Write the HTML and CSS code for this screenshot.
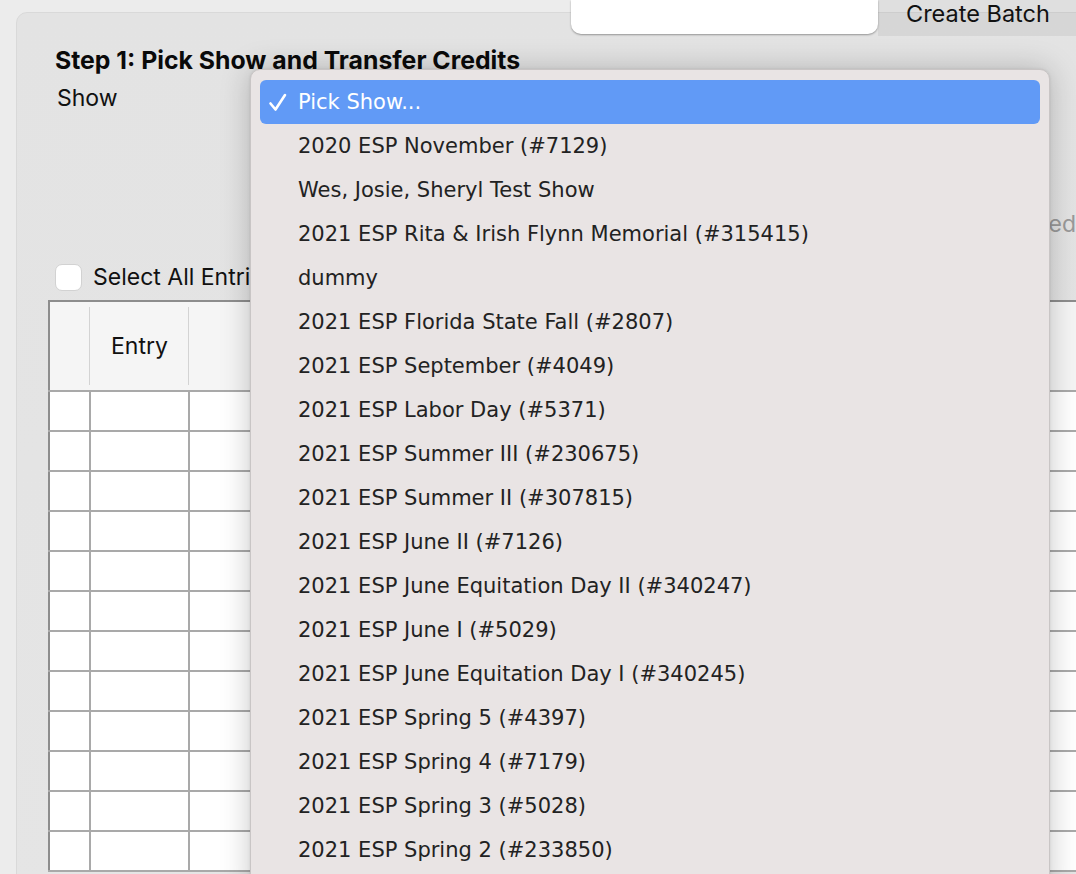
FILE: index.html
```html
<!DOCTYPE html>
<html>
<head>
<meta charset="utf-8">
<link rel="stylesheet" href="styles.css">
</head>
<body>
<header class="topbar">
  <div class="search-field"></div>
  <button class="batch-btn">Create Batch</button>
</header>

<main class="panel">
  <h2 class="step-title">Step 1: Pick Show and Transfer Credits</h2>
  <div class="show-row">Show</div>
  <div class="status-row"><span class="status-text">Credits Transferred</span></div>
  <label class="select-all"><span class="checkbox"></span><span>Select All Entries</span></label>

  <table class="entries">
    <thead>
      <tr><th class="c1"></th><th class="c2">Entry</th><th class="c3"></th></tr>
    </thead>
    <tbody>
      <tr><td></td><td></td><td></td></tr>
      <tr><td></td><td></td><td></td></tr>
      <tr><td></td><td></td><td></td></tr>
      <tr><td></td><td></td><td></td></tr>
      <tr><td></td><td></td><td></td></tr>
      <tr><td></td><td></td><td></td></tr>
      <tr><td></td><td></td><td></td></tr>
      <tr><td></td><td></td><td></td></tr>
      <tr><td></td><td></td><td></td></tr>
      <tr><td></td><td></td><td></td></tr>
      <tr><td></td><td></td><td></td></tr>
      <tr><td></td><td></td><td></td></tr>
    </tbody>
  </table>
</main>

<ul class="menu">
  <li class="menu-item selected"><svg class="check" viewBox="0 0 20 20" width="20" height="20"><path d="M2.5 11.5 L7.5 17.5 L17 3" fill="none" stroke="#fff" stroke-width="2.6" stroke-linecap="round" stroke-linejoin="round"/></svg>Pick Show...</li>
  <li class="menu-item">2020 ESP November (#7129)</li>
  <li class="menu-item">Wes, Josie, Sheryl Test Show</li>
  <li class="menu-item">2021 ESP Rita &amp; Irish Flynn Memorial (#315415)</li>
  <li class="menu-item">dummy</li>
  <li class="menu-item">2021 ESP Florida State Fall (#2807)</li>
  <li class="menu-item">2021 ESP September (#4049)</li>
  <li class="menu-item">2021 ESP Labor Day (#5371)</li>
  <li class="menu-item">2021 ESP Summer III (#230675)</li>
  <li class="menu-item">2021 ESP Summer II (#307815)</li>
  <li class="menu-item">2021 ESP June II (#7126)</li>
  <li class="menu-item">2021 ESP June Equitation Day II (#340247)</li>
  <li class="menu-item">2021 ESP June I (#5029)</li>
  <li class="menu-item">2021 ESP June Equitation Day I (#340245)</li>
  <li class="menu-item">2021 ESP Spring 5 (#4397)</li>
  <li class="menu-item">2021 ESP Spring 4 (#7179)</li>
  <li class="menu-item">2021 ESP Spring 3 (#5028)</li>
  <li class="menu-item">2021 ESP Spring 2 (#233850)</li>
</ul>
</body>
</html>
```

FILE: styles.css
```css
html, body {
  margin: 0;
  padding: 0;
}
body {
  width: 1076px;
  height: 874px;
  overflow: hidden;
  background: #ececec;
  font-family: Inter, "Liberation Sans", sans-serif;
  color: #111;
  position: relative;
}

.topbar {
  position: absolute;
  top: 0;
  left: 571px;
  right: 0;
  height: 36px;
  display: flex;
  z-index: 2;
}
.search-field {
  width: 307px;
  height: 34px;
  background: #fff;
  border-radius: 0 0 10px 10px;
  box-shadow: 0 1px 2px rgba(0,0,0,0.35);
}
.batch-btn {
  flex: 1;
  border: 0;
  margin: 0;
  background: rgba(0,0,0,0.055);
  font-family: Inter, "Liberation Sans", sans-serif;
  font-size: 23.5px;
  color: #111;
  text-align: left;
  padding: 0 0 8px 28px;
  line-height: 28px;
}

.panel {
  margin: 12px 0 0 16px;
  width: 1120px;
  height: 900px;
  box-sizing: border-box;
  border: 1px solid #d9d9d9;
  border-radius: 11px;
  background: linear-gradient(#e3e3e3, #e5e5e5);
  padding: 33px 0 0 31px;
}

.step-title {
  margin: 0 0 0 7px;
  font-size: 24.8px;
  font-weight: 700;
  line-height: 28px;
  color: #0a0a0a;
}
.show-row {
  margin: 10px 0 0 9px;
  font-size: 23px;
  line-height: 28px;
}
.status-row {
  margin-top: 98px;
  width: 1028px;
  display: flex;
  justify-content: flex-end;
}
.status-text {
  font-size: 23px;
  line-height: 28px;
  color: #9a9a9a;
}
.select-all {
  margin: 25px 0 0 7px;
  display: flex;
  align-items: center;
  gap: 11px;
  font-size: 23px;
  line-height: 28px;
}
.checkbox {
  width: 25px;
  height: 25px;
  background: #fff;
  border: 1px solid #d2d2d2;
  border-radius: 7px;
  box-sizing: content-box;
}

.entries {
  margin-top: 9px;
  border-collapse: collapse;
  width: 1060px;
  border-top: 2px solid #8d8d8d;
  border-left: 2px solid #8d8d8d;
  background: #fff;
}
.entries thead th {
  height: 88px;
  padding: 0;
  background: #f5f5f5;
  font-weight: 400;
  font-size: 23px;
  color: #111;
  border-bottom: 2px solid #a9a9a9;
  position: relative;
}
.entries th.c1 { width: 40px; }
.entries th.c2 { width: 99px; }
.entries th.c1::after,
.entries th.c2::after {
  content: "";
  position: absolute;
  right: -1px;
  top: 5px;
  bottom: 5px;
  width: 2px;
  background: #d3d3d3;
}
.entries td {
  height: 38px;
  padding: 0;
  border-bottom: 2px solid #a9a9a9;
  border-right: 2px solid #a9a9a9;
}

.menu {
  position: absolute;
  left: 250px;
  top: 69px;
  width: 800px;
  height: 830px;
  box-sizing: border-box;
  margin: 0;
  padding: 10px 9px;
  list-style: none;
  background: #e9e4e4;
  border: 1px solid #c9c5c5;
  border-radius: 10px;
  box-shadow: 0 0 30px rgba(0,0,0,0.22), 0 0 3px rgba(0,0,0,0.1);
  z-index: 3;
  font-family: "DejaVu Sans", "Liberation Sans", sans-serif;
}
.menu-item {
  height: 44px;
  line-height: 44px;
  padding-left: 38px;
  font-size: 21px;
  color: #222;
  position: relative;
  white-space: nowrap;
}
.menu-item.selected {
  background: #619af6;
  color: #fff;
  border-radius: 6px;
}
.check {
  position: absolute;
  left: 8px;
  top: 12px;
}
```
